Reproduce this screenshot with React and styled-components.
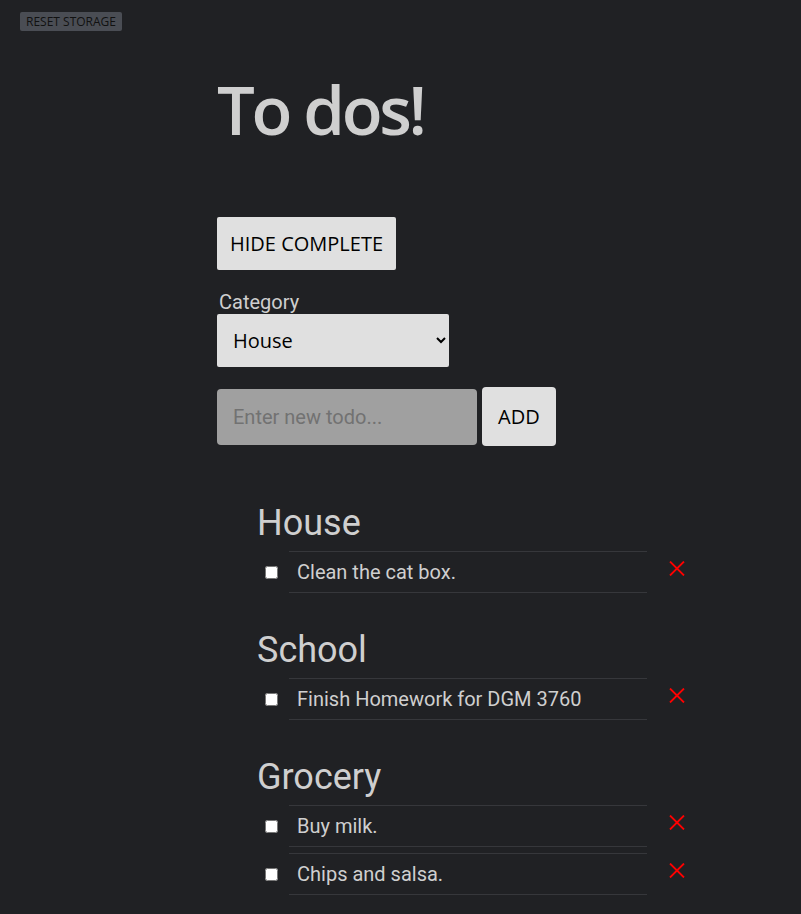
import React from "react";
import styled, { createGlobalStyle } from "styled-components";

const GlobalStyle = createGlobalStyle`
    html, body {
        margin: 0;
        padding: 0;
        background: #202124;
    }
    body {
        font-family: "Open Sans", sans-serif;
        color: #cfcfcf;
    }
`;

const Page = styled.div`
    min-height: 914px;
    padding-top: 12px;
    box-sizing: border-box;
`;

const TopBar = styled.div`
    padding-left: 20px;
    display: flex;
`;

const ResetButton = styled.button`
    height: 19px;
    padding: 0 6px;
    border: none;
    border-radius: 2px;
    background: #4a4d54;
    color: #111;
    font-family: "Open Sans", sans-serif;
    font-size: 12px;
    line-height: 19px;
`;

const Main = styled.main`
    padding-left: 217px;
`;

const Title = styled.h1`
    margin: 32px 0 62px;
    font-family: "Open Sans", sans-serif;
    font-size: 67px;
    font-weight: 600;
    letter-spacing: -3.3px;
    line-height: normal;
    color: #cfcfcf;
`;

const Controls = styled.div`
    display: flex;
    flex-direction: column;
    align-items: flex-start;
`;

const LightButton = styled.button`
    height: ${(p) => p.h || 53}px;
    padding: 0 ${(p) => p.px || 13}px;
    border: none;
    border-radius: ${(p) => p.radius || 2}px;
    background: #e0e0e0;
    color: #000;
    font-family: "Open Sans", sans-serif;
    font-size: 20px;
`;

const Label = styled.label`
    margin: 21px 0 0 2px;
    font-family: Roboto, sans-serif;
    font-size: 20px;
    line-height: 23px;
    color: #cfcfcf;
`;

const Select = styled.select`
    width: 232px;
    height: 53px;
    padding: 0 12px;
    border: none;
    border-radius: 2px;
    background: #e0e0e0;
    color: #000;
    font-family: "Open Sans", sans-serif;
    font-size: 20px;
`;

const InputRow = styled.div`
    display: flex;
    align-items: center;
    gap: 5px;
    margin-top: 20px;
`;

const TodoInput = styled.input`
    width: 260px;
    height: 56px;
    box-sizing: border-box;
    padding: 0 16px;
    border: none;
    border-radius: 4px;
    background: #a0a0a0;
    font-family: Roboto, sans-serif;
    font-size: 20px;
    color: #222;
    outline: none;

    &::placeholder {
        color: #727272;
    }
`;

const Lists = styled.div`
    margin-top: 56px;
    padding-left: 40px;
`;

const Section = styled.section`
    margin-bottom: 36px;
`;

const Heading = styled.h2`
    margin: 0 0 7px;
    font-family: Roboto, sans-serif;
    font-size: 36px;
    font-weight: 400;
    line-height: 42px;
    color: #cfcfcf;
`;

const Items = styled.ul`
    list-style: none;
    margin: 0;
    padding: 0;
    display: flex;
    flex-direction: column;
    gap: 6px;
`;

const Item = styled.li`
    display: flex;
    align-items: center;
`;

const Check = styled.input`
    width: 13px;
    height: 13px;
    margin: 0 11px 0 8px;
`;

const Text = styled.div`
    width: 358px;
    height: 42px;
    box-sizing: border-box;
    padding: 0 8px;
    border-top: 1px solid #36373b;
    border-bottom: 1px solid #36373b;
    font-family: Roboto, sans-serif;
    font-size: 20px;
    line-height: 40px;
    color: #cfcfcf;
`;

const Delete = styled.button`
    align-self: flex-start;
    margin: 10px 0 0 22px;
    padding: 0;
    border: none;
    background: none;
    width: 16px;
    height: 15px;
    display: flex;
`;

const categories = [
    { name: "House", items: ["Clean the cat box."] },
    { name: "School", items: ["Finish Homework for DGM 3760"] },
    { name: "Grocery", items: ["Buy milk.", "Chips and salsa."] },
];

function Cross() {
    return (
        <svg width="16" height="15" viewBox="0 0 16 15">
            <path d="M1 0.5 L15 14.5 M15 0.5 L1 14.5" stroke="#f00" strokeWidth="1.8" />
        </svg>
    );
}

export default function App() {
    return (
        <>
            <GlobalStyle />
            <Page>
                <TopBar>
                    <ResetButton>RESET STORAGE</ResetButton>
                </TopBar>
                <Main>
                    <Title>To dos!</Title>
                    <Controls>
                        <LightButton>HIDE COMPLETE</LightButton>
                        <Label htmlFor="category">Category</Label>
                        <Select id="category" defaultValue="House">
                            <option>House</option>
                            <option>School</option>
                            <option>Grocery</option>
                        </Select>
                        <InputRow>
                            <TodoInput placeholder="Enter new todo..." />
                            <LightButton h={59} px={16} radius={4}>ADD</LightButton>
                        </InputRow>
                    </Controls>
                    <Lists>
                        {categories.map((cat) => (
                            <Section key={cat.name}>
                                <Heading>{cat.name}</Heading>
                                <Items>
                                    {cat.items.map((item) => (
                                        <Item key={item}>
                                            <Check type="checkbox" />
                                            <Text>{item}</Text>
                                            <Delete aria-label="delete">
                                                <Cross />
                                            </Delete>
                                        </Item>
                                    ))}
                                </Items>
                            </Section>
                        ))}
                    </Lists>
                </Main>
            </Page>
        </>
    );
}
